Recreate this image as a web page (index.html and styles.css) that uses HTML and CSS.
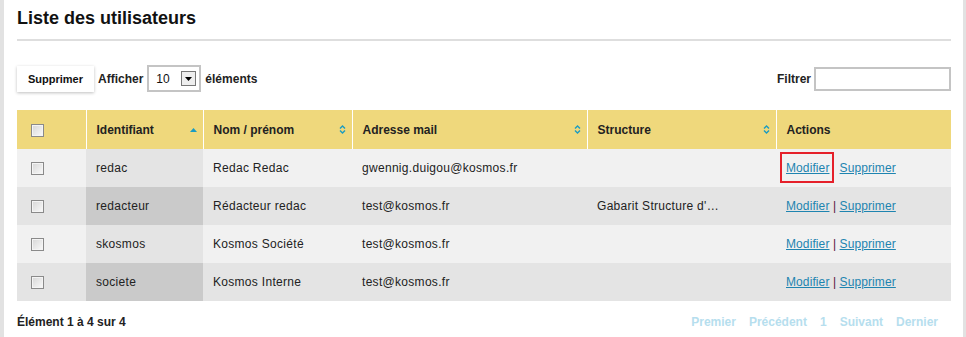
FILE: index.html
```html
<!doctype html>
<html>
<head>
<meta charset="utf-8">
<title>Liste des utilisateurs</title>
<link rel="stylesheet" href="styles.css">
</head>
<body>
<div class="page">
	<h1 class="title">Liste des utilisateurs</h1>
	<div class="toolbar">
		<div class="tools-left">
			<span class="btn">Supprimer</span>
			<span class="lbl">Afficher</span>
			<span class="select"><span class="val">10</span><span class="arrow"><svg width="7" height="4" viewBox="0 0 7 4"><path d="M0 0h7L3.5 4z" fill="#000"/></svg></span></span>
			<span class="lbl">éléments</span>
		</div>
		<div class="tools-right">
			<span class="lbl">Filtrer</span>
			<span class="filter"></span>
		</div>
	</div>
	<table class="grid">
		<thead>
			<tr>
				<th class="c-chk"><span class="chk"></span></th>
				<th class="c-id"><div class="th-in">Identifiant<svg class="sort" width="7" height="4" viewBox="0 0 7 4"><path d="M3.5 0L7 4H0z" fill="#1a9bc2"/></svg></div></th>
				<th class="c-nom"><div class="th-in">Nom / prénom<svg class="sort" width="7" height="11" viewBox="0 0 7 11"><path d="M1 4.5L3.5 2L6 4.5M1 6.5L3.5 9L6 6.5" fill="none" stroke="#1a9bc2" stroke-width="1.4"/></svg></div></th>
				<th class="c-mail"><div class="th-in">Adresse mail<svg class="sort" width="7" height="11" viewBox="0 0 7 11"><path d="M1 4.5L3.5 2L6 4.5M1 6.5L3.5 9L6 6.5" fill="none" stroke="#1a9bc2" stroke-width="1.4"/></svg></div></th>
				<th class="c-str"><div class="th-in">Structure<svg class="sort" width="7" height="11" viewBox="0 0 7 11"><path d="M1 4.5L3.5 2L6 4.5M1 6.5L3.5 9L6 6.5" fill="none" stroke="#1a9bc2" stroke-width="1.4"/></svg></div></th>
				<th class="c-act">Actions</th>
			</tr>
		</thead>
		<tbody>
			<tr class="odd">
				<td class="c-chk"><span class="chk"></span></td>
				<td class="sorted">redac</td>
				<td>Redac Redac</td>
				<td>gwennig.duigou@kosmos.fr</td>
				<td></td>
				<td class="act"><a href="#" class="hl">Modifier</a> <span class="sep hidden">|</span> <a href="#">Supprimer</a></td>
			</tr>
			<tr class="even">
				<td class="c-chk"><span class="chk"></span></td>
				<td class="sorted">redacteur</td>
				<td>Rédacteur redac</td>
				<td>test@kosmos.fr</td>
				<td>Gabarit Structure d'…</td>
				<td class="act"><a href="#">Modifier</a> <span class="sep">|</span> <a href="#">Supprimer</a></td>
			</tr>
			<tr class="odd">
				<td class="c-chk"><span class="chk"></span></td>
				<td class="sorted">skosmos</td>
				<td>Kosmos Société</td>
				<td>test@kosmos.fr</td>
				<td></td>
				<td class="act"><a href="#">Modifier</a> <span class="sep">|</span> <a href="#">Supprimer</a></td>
			</tr>
			<tr class="even">
				<td class="c-chk"><span class="chk"></span></td>
				<td class="sorted">societe</td>
				<td>Kosmos Interne</td>
				<td>test@kosmos.fr</td>
				<td></td>
				<td class="act"><a href="#">Modifier</a> <span class="sep">|</span> <a href="#">Supprimer</a></td>
			</tr>
		</tbody>
	</table>
	<div class="footer">
		<span class="info">Élément 1 à 4 sur 4</span>
		<div class="pager">
			<span>Premier</span><span>Précédent</span><span>1</span><span>Suivant</span><span>Dernier</span>
		</div>
	</div>
</div>
</body>
</html>
```

FILE: styles.css
```css
*{ margin:0; padding:0; box-sizing:border-box;}
html,body{ height:100%;}
body{ background:#e2e2e2; font-family:"Liberation Sans", Arial, sans-serif; font-size:12px; color:#222; padding:0 3px 0 4px;}
.page{ background:#fff; height:100%; padding:0 12px 0 13px;}

.title{ font-size:18px; font-weight:bold; color:#111; line-height:22px; padding:7px 0 10px; border-bottom:2px solid #dedede;}

.toolbar{ display:flex; justify-content:space-between; align-items:center; margin-top:24px; height:27px;}
.tools-left,.tools-right{ display:flex; align-items:center;}
.btn{ height:26px; line-height:26px; padding:0 11px; background:#fff; font-weight:bold; font-size:11px; color:#111; box-shadow:0 1px 3px rgba(0,0,0,0.25);}
.lbl{ font-weight:bold; color:#222; margin:0 4px;}
.tools-right .lbl{ margin-right:3px;}
.select{ display:flex; align-items:center; justify-content:space-between; width:54px; height:27px; border:2px solid #c4c4c4; padding:0 3px 0 7px; color:#111; font-size:12px;}
.select .arrow{ width:15px; height:15px; border:1px solid #777; background:#eee; display:flex; align-items:center; justify-content:center;}
.filter{ display:block; width:137px; height:24px; border:2px solid #c4c4c4; background:#fff;}

.grid{ width:100%; border-collapse:collapse; margin-top:18px; table-layout:fixed;}
.grid th{ background:#efd87c; height:39px; text-align:left; font-weight:bold; color:#222; padding:0 6px 0 10px; border-left:1px solid #fff;}
.grid th:first-child{ border-left:0;}
.th-in{ display:flex; justify-content:space-between; align-items:center;}
.grid td{ height:38px; padding:0 10px; color:#222; white-space:nowrap; overflow:hidden; letter-spacing:0.3px;}
.grid .c-chk{ width:69px; text-align:left; padding:0 0 0 14px;}
.grid .c-id{ width:117px;}
.grid .c-nom{ width:149px;}
.grid .c-mail{ width:235px;}
.grid .c-str{ width:189px;}
.grid .c-act{ padding-left:10px;}
tr.odd td{ background:#f1f1f1;}
tr.even td{ background:#e4e4e4;}
tr.odd td.sorted{ background:#e4e4e4;}
tr.even td.sorted{ background:#cacaca;}

.chk{ display:inline-block; width:13px; height:13px; border:1px solid #8a8a8a; background:linear-gradient(135deg,#d6d6d6,#fafafa); vertical-align:middle; box-shadow:inset 0 0 0 1px #f4f4f4;}

.grid td.act{ padding-left:10px; letter-spacing:0.1px;}
.act a{ color:#1e84b0; text-decoration:underline;}
.act .sep{ color:#5a1040;}
.act .sep.hidden{ visibility:hidden;}
.act a.hl{ position:relative;}
.act a.hl::after{ content:""; position:absolute; left:-6px; right:-5px; top:-9px; bottom:-8px; border:2px solid #e5202a;}

.footer{ display:flex; justify-content:space-between; align-items:center; margin-top:14px; padding-right:13px;}
.info{ font-weight:bold; color:#222;}
.pager{ display:flex; gap:13px;}
.pager span{ font-weight:bold; color:#b6deee;}
```
